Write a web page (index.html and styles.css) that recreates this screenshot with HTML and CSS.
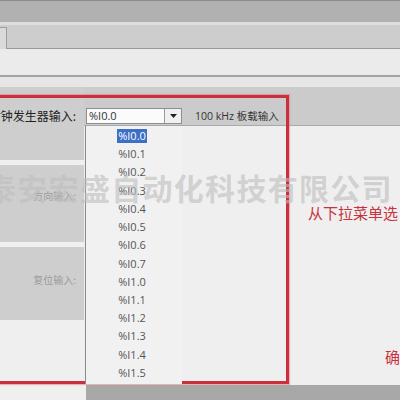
FILE: index.html
```html
<!DOCTYPE html>
<html lang="zh">
<head>
<meta charset="utf-8">
<link rel="stylesheet" href="styles.css">
</head>
<body>
<div class="page">
  <div class="bar bar1"></div>
  <div class="bar bar2"><div class="tab"></div></div>
  <div class="bar bar3"></div>
  <div class="bar bar4"></div>
  <div class="main">
    <div class="labels">
      <div class="lab lab1"><span>时钟发生器输入:</span></div>
      <div class="lab lab2"><span>方向输入:</span></div>
      <div class="lab lab3"><span>复位输入:</span></div>
    </div>
    <div class="content">
      <div class="row1">
        <div class="select">
          <span class="sel-text">%I0.0</span>
          <span class="sel-btn"><svg width="9" height="6" viewBox="0 0 9 6"><path d="M1 1h7L4.5 5z" fill="#222"/></svg></span>
        </div>
        <span class="hint">100 kHz 板载输入</span>
      </div>
    </div>
  </div>
  <div class="foot"><div class="foot-left"></div><div class="foot-right"></div></div>

  <div class="redbox"></div>
  <ul class="list">
    <li><span class="sel">%I0.0</span></li>
    <li>%I0.1</li>
    <li>%I0.2</li>
    <li>%I0.3</li>
    <li>%I0.4</li>
    <li>%I0.5</li>
    <li>%I0.6</li>
    <li>%I0.7</li>
    <li>%I1.0</li>
    <li>%I1.1</li>
    <li>%I1.2</li>
    <li>%I1.3</li>
    <li>%I1.4</li>
    <li>%I1.5</li>
  </ul>
  <div class="watermark">泰安宏盛自动化科技有限公司</div>
  <div class="note note1">从下拉菜单选</div>
  <div class="note note2">确</div>
</div>
</body>
</html>
```
FILE: styles.css
```css
html, body {
  margin: 0;
  padding: 0;
}
body {
  width: 400px;
  height: 400px;
  overflow: hidden;
  background: #ececec;
  font-family: "Open Sans", "Noto Sans", "Noto Sans CJK SC", sans-serif;
}
.page {
  position: relative;
  width: 400px;
  height: 400px;
  overflow: hidden;
}
.bar1 {
  height: 21px;
  background: #b1b1b1;
  border-top: 1px solid #8c8c8c;
}
.bar2 {
  height: 23px;
  background: #cdcdcd;
  border-top: 3px solid #dedede;
  border-bottom: 1px solid #9a9a9a;
  position: relative;
}
.tab {
  width: 6px;
  height: 21px;
  margin-top: 2px;
  border: 1px solid #9d9d9d;
  border-left: none;
  border-bottom: none;
  background: #dadada;
}
.bar3 {
  height: 26px;
  background: #ebebeb;
  border-bottom: 2px solid #a3a3a3;
}
.bar4 {
  height: 10px;
  background: #e6e6e6;
}
.main {
  display: grid;
  grid-template-columns: 84px 1fr;
  height: 298px;
  background: #efefef;
}
.labels {
  display: flex;
  flex-direction: column;
  gap: 5px;
}
.lab {
  background: #cecece;
  display: flex;
  justify-content: flex-end;
  overflow: hidden;
  white-space: nowrap;
  padding-right: 8px;
  font-family: "Noto Sans CJK SC", sans-serif;
}
.lab1 {
  height: 73px;
  padding-top: 21px;
  box-sizing: border-box;
  font-size: 12px;
  color: #222;
  line-height: 16px;
  padding-right: 8px;
}
.lab2, .lab3 {
  height: 77px;
  box-sizing: border-box;
  padding-top: 24px;
  font-size: 10px;
  line-height: 14px;
  color: #9b9b9b;
}
.lab3 {
  height: 73px;
  padding-top: 26px;
}
.content {
  display: flex;
  flex-direction: column;
}
.row1 {
  height: 39px;
  box-sizing: border-box;
  background: #cbcbcb;
  border-bottom: 1px solid #a9a9a9;
  display: flex;
  align-items: flex-start;
  padding-top: 21px;
  padding-left: 2px;
}
.select {
  width: 96px;
  height: 16px;
  box-sizing: border-box;
  border: 1px solid #8e8e8e;
  background: #fbfbfb;
  display: flex;
  align-items: center;
}
.sel-text {
  flex: 1;
  font-size: 11px;
  color: #333;
  padding-left: 2px;
  line-height: 14px;
}
.sel-btn {
  width: 16px;
  height: 14px;
  border-left: 1px solid #9a9a9a;
  background: #f0f0f0;
  display: flex;
  align-items: center;
  justify-content: center;
}
.hint {
  margin-left: 13px;
  font-size: 10.5px;
  color: #333;
  line-height: 16px;
  white-space: nowrap;
  font-family: "Open Sans", "Noto Sans CJK SC", sans-serif;
}
.foot {
  display: grid;
  grid-template-columns: 86px 1fr;
  height: 15px;
}
.foot-left { background: #efefef; }
.foot-right { background: #a8a8a8; }

.watermark {
  position: absolute;
  left: -14px;
  top: 167px;
  font-family: "Noto Sans CJK SC", sans-serif;
  font-size: 30px;
  font-weight: bold;
  line-height: 40px;
  color: rgba(190, 190, 190, 0.62);
  white-space: nowrap;
  letter-spacing: 1.3px;
}
.redbox {
  position: absolute;
  left: -4px;
  top: 95px;
  width: 287px;
  height: 283px;
  border: 3.5px solid #c92f3d;
  box-shadow: 0 0 1px 1px rgba(230, 120, 130, 0.5);
}
.list {
  position: absolute;
  left: 85px;
  top: 126px;
  width: 97px;
  height: 258px;
  margin: 0;
  padding: 1px 0 0 0;
  list-style: none;
  background: #f1f1f1;
  border-left: 1px solid #8a8a8a;
  box-sizing: border-box;
}
.list li {
  height: 18.23px;
  line-height: 18.23px;
  text-align: center;
  font-size: 11px;
  color: #555;
  padding-right: 4px;
}
.list .sel {
  background: #3d6fc4;
  color: #fff;
  padding: 0 1px;
  display: inline-block;
  line-height: 14px;
}
.note {
  position: absolute;
  font-family: "Noto Sans CJK SC", sans-serif;
  color: #c8323d;
  font-size: 15px;
  line-height: 18px;
  white-space: nowrap;
}
.note1 {
  left: 308px;
  top: 204px;
}
.note2 {
  left: 385px;
  top: 348px;
}
```
